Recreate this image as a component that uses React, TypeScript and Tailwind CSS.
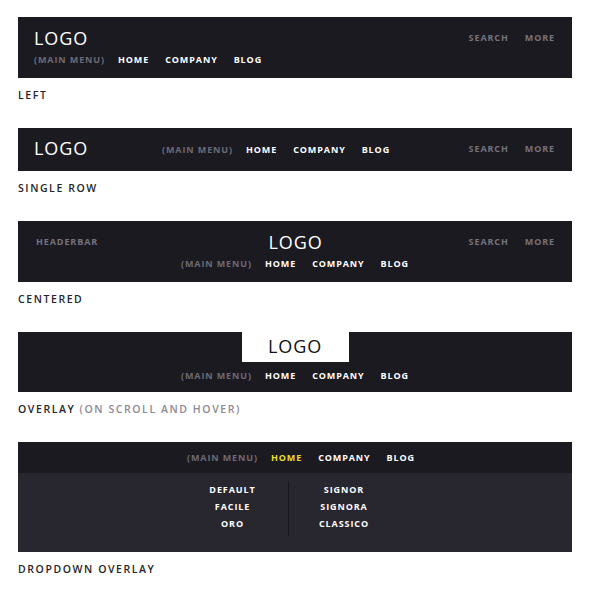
import React from 'react';

const font = { fontFamily: '"Open Sans", "DejaVu Sans", sans-serif' };

const Menu: React.FC<{ active?: boolean }> = ({ active }) => (
  <div className="flex items-center text-[9px] font-bold tracking-[0.1em] leading-none whitespace-nowrap">
    <span className="text-[#6c6a75]">(MAIN MENU)</span>
    <span className={`ml-[13px] ${active ? 'text-[#e9de2b]' : 'text-white'}`}>HOME</span>
    <span className="ml-[16px] text-white">COMPANY</span>
    <span className="ml-[16px] text-white">BLOG</span>
  </div>
);

const Extras = () => (
  <div className="flex items-center gap-[16px] text-[9px] font-bold tracking-[0.1em] leading-none text-[#74727d] mb-[2px]">
    <span>SEARCH</span>
    <span>MORE</span>
  </div>
);

const Logo: React.FC<{ dark?: boolean }> = ({ dark }) => (
  <span className={`text-[18px] leading-none tracking-[0.05em] ${dark ? 'text-[#111]' : 'text-white'}`}>LOGO</span>
);

const Label: React.FC<{ children: React.ReactNode }> = ({ children }) => (
  <div className="mt-[11px] mb-[27px] h-[12px] leading-[12px] text-[10.5px] font-semibold tracking-[0.15em] text-[#25242a]">
    {children}
  </div>
);

export default function App() {
  return (
    <div className="min-h-[590px] bg-white pt-[17px] px-[18px]" style={font}>
      <div className="w-[554px]">
        {/* left */}
        <div className="h-[61px] bg-[#1b1a21] pl-[16px] pr-[17px] pt-[10px]">
          <div className="flex h-[22px] items-center justify-between">
            <Logo />
            <Extras />
          </div>
          <div className="flex h-[21px] items-center">
            <Menu />
          </div>
        </div>
        <Label>LEFT</Label>

        {/* single row */}
        <div className="flex h-[43px] items-center bg-[#1b1a21] pl-[16px] pr-[17px] pb-[1px]">
          <div className="w-[128px]">
            <Logo />
          </div>
          <Menu />
          <div className="ml-auto">
            <Extras />
          </div>
        </div>
        <Label>SINGLE ROW</Label>

        {/* centered */}
        <div className="h-[61px] bg-[#1b1a21] pl-[18px] pr-[17px] pt-[10px]">
          <div className="grid h-[22px] grid-cols-[1fr_auto_1fr] items-center">
            <span className="mb-[2px] text-[9px] font-bold tracking-[0.1em] leading-none text-[#74727d]">HEADERBAR</span>
            <Logo />
            <div className="flex justify-end">
              <Extras />
            </div>
          </div>
          <div className="flex h-[21px] items-center justify-center pr-[1px]">
            <Menu />
          </div>
        </div>
        <Label>CENTERED</Label>

        {/* overlay */}
        <div className="h-[60px] bg-[#1b1a21]">
          <div className="mx-auto flex h-[30px] w-[107px] items-center justify-center bg-white pb-[3px]">
            <Logo dark />
          </div>
          <div className="flex h-[27px] items-center justify-center">
            <Menu />
          </div>
        </div>
        <Label>
          OVERLAY <span className="text-[#8b8994]">(ON SCROLL AND HOVER)</span>
        </Label>

        {/* dropdown overlay */}
        <div className="h-[110px] bg-[#28262f]">
          <div className="flex h-[31px] items-center justify-center bg-[#1b1a21] pl-[12px] pb-[1px]">
            <Menu active />
          </div>
          <div className="flex justify-center pt-[8px] pr-[14px]">
            <div className="w-[111px] pb-[4px] text-center text-[9px] font-bold tracking-[0.1em] leading-[17px] text-white">
              <div>DEFAULT</div>
              <div>FACILE</div>
              <div>ORO</div>
            </div>
            <div className="w-[111px] border-l border-[#17161c] pb-[4px] text-center text-[9px] font-bold tracking-[0.1em] leading-[17px] text-white">
              <div>SIGNOR</div>
              <div>SIGNORA</div>
              <div>CLASSICO</div>
            </div>
          </div>
        </div>
        <Label>DROPDOWN OVERLAY</Label>
      </div>
    </div>
  );
}
